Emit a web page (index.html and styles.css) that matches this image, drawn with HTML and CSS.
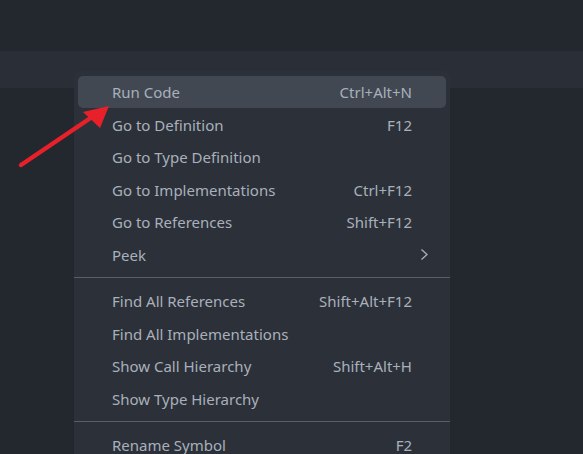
FILE: index.html
```html
<!DOCTYPE html>
<html>
<head>
<meta charset="utf-8">
<link rel="stylesheet" href="styles.css">
</head>
<body>
<div class="editor">
  <div class="band"></div>
  <div class="menu">
    <div class="item active"><span class="label">Run Code</span><span class="key">Ctrl+Alt+N</span></div>
    <div class="item"><span class="label">Go to Definition</span><span class="key">F12</span></div>
    <div class="item"><span class="label">Go to Type Definition</span><span class="key"></span></div>
    <div class="item"><span class="label">Go to Implementations</span><span class="key">Ctrl+F12</span></div>
    <div class="item"><span class="label">Go to References</span><span class="key">Shift+F12</span></div>
    <div class="item"><span class="label">Peek</span><span class="key chev"><svg width="9" height="13" viewBox="0 0 9 13"><path d="M1.5 1.5 L7 6.5 L1.5 11.5" fill="none" stroke="#a9b0bb" stroke-width="1.3"/></svg></span></div>
    <div class="sep"></div>
    <div class="item"><span class="label">Find All References</span><span class="key">Shift+Alt+F12</span></div>
    <div class="item"><span class="label">Find All Implementations</span><span class="key"></span></div>
    <div class="item"><span class="label">Show Call Hierarchy</span><span class="key">Shift+Alt+H</span></div>
    <div class="item"><span class="label">Show Type Hierarchy</span><span class="key"></span></div>
    <div class="sep"></div>
    <div class="item"><span class="label">Rename Symbol</span><span class="key">F2</span></div>
  </div>
  <svg class="arrow" width="120" height="180" viewBox="0 0 120 180">
    <line x1="21" y1="165" x2="92" y2="117" stroke="#e8202a" stroke-width="4.5" stroke-linecap="round"/>
    <polygon points="109,106 83,112 100,128" fill="#e8202a"/>
  </svg>
</div>
</body>
</html>
```
FILE: styles.css
```css
html, body {
  margin: 0;
  padding: 0;
  background: #23272e;
  overflow: hidden;
}
.editor {
  position: relative;
  width: 583px;
  height: 454px;
  padding-top: 51px;
  box-sizing: border-box;
}
.band {
  height: 37px;
  background: #2a2e36;
}
.menu {
  position: absolute;
  left: 74px;
  top: 71px;
  width: 376px;
  box-sizing: border-box;
  padding: 5px 4px;
  background: #2c3139;
  border-radius: 6px;
  font-family: "Noto Sans", "Open Sans", sans-serif;
  font-size: 15px;
  color: #a9b0bb;
}
.item {
  display: flex;
  justify-content: space-between;
  align-items: center;
  height: 32.5px;
  padding: 0 34px;
  box-sizing: border-box;
  border-radius: 5px;
}
.item.active {
  background: #414852;
  height: 32px;
  margin-bottom: 0.5px;
}
.key.chev {
  margin-right: -17px;
  display: flex;
}
.sep {
  height: 1px;
  background: #5a5e66;
  margin: 6px -4px 7px;
}
.arrow {
  position: absolute;
  left: 0;
  top: 0;
}
```
